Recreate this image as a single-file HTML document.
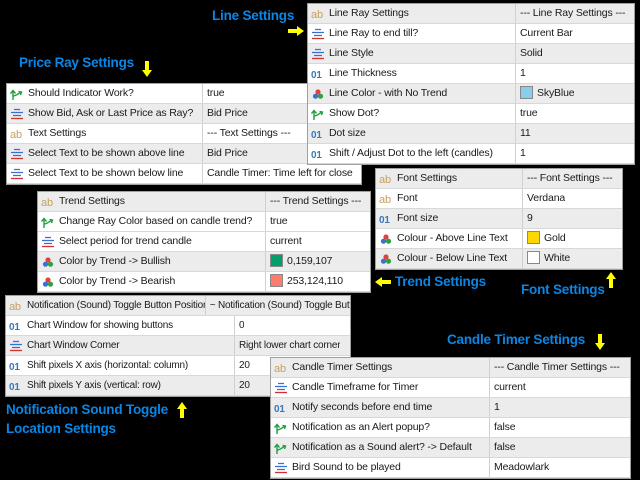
<!DOCTYPE html>
<html><head><meta charset="utf-8">
<style>
*{margin:0;padding:0;box-sizing:border-box}
body{width:640px;height:480px;background:#000;position:relative;overflow:hidden;font-family:"Liberation Sans",sans-serif;font-size:10.5px;letter-spacing:-0.15px;color:#1a1a1a}
.p{position:absolute;background:#fff;border:1px solid #a0a0a0}
.r{height:20px;display:flex;border-bottom:1px solid #d8d8d8}
.r.g{background:#ececec}
.r>div{height:19px;line-height:19px;white-space:nowrap;overflow:hidden}
.c1{display:flex;align-items:center;border-right:1px solid #d0d0d0;padding-left:3px}
.c2{padding-left:4px}
.c1 svg{width:14px;height:12px;margin-right:4px;flex:none}
.lbl{position:absolute;color:#0a86e6;font-weight:bold;font-size:13.5px;font-family:"Liberation Sans",sans-serif;letter-spacing:-0.2px}
.sw{display:inline-block;width:13px;height:13px;border:1px solid #888;vertical-align:-3px;margin-right:4px}
.ar{position:absolute}
</style></head><body>
<svg width="0" height="0" style="position:absolute">
<defs>
<symbol id="ab" viewBox="0 0 14 12"><text x="0" y="10" font-size="11" fill="#c8a060" font-family="Liberation Sans">ab</text></symbol>
<symbol id="n" viewBox="0 0 14 12"><text x="0" y="10" font-size="10" fill="#3a78b8" font-family="Liberation Sans" font-weight="bold">01</text></symbol>
<symbol id="ln" viewBox="0 0 14 12"><path d="M4 1.5h6M1 4.5h12M3 7.5h8" stroke="#3a6fd0" stroke-width="1.3"/><path d="M1 10.5h12" stroke="#d03030" stroke-width="1.3"/></symbol>
<symbol id="co" viewBox="0 0 14 12"><circle cx="7" cy="4" r="2.6" fill="#e04040"/><circle cx="4.5" cy="8.2" r="2.6" fill="#3a70d0"/><circle cx="9.5" cy="8.2" r="2.6" fill="#30a040"/></symbol>
<symbol id="bo" viewBox="0 0 14 12"><path d="M3 12V3M0.5 5.5L3 2.5l2.5 3M3 8c3 0 5-2 8-4M8.5 3.5L11.5 4l-1 3" stroke="#20a040" stroke-width="1.4" fill="none"/></symbol>
</defs></svg>

<div class="lbl" style="left:212px;top:8px">Line Settings</div>
<svg class="ar" style="left:288px;top:26px" width="16" height="10"><path d="M0 3h9V0l7 5-7 5V7H0z" fill="#ffff00"/></svg>
<div class="lbl" style="left:19px;top:55px">Price Ray Settings</div>
<svg class="ar" style="left:142px;top:61px" width="10" height="16"><path d="M3 0h4v9h3l-5 7-5-7h3z" fill="#ffff00"/></svg>

<div class="p" style="left:6px;top:83px;width:356px">
<div class="r"><div class="c1" style="width:196px"><svg><use href="#bo"/></svg>Should Indicator Work?</div><div class="c2">true</div></div>
<div class="r g"><div class="c1" style="width:196px"><svg><use href="#ln"/></svg>Show Bid, Ask or Last Price as Ray?</div><div class="c2">Bid Price</div></div>
<div class="r"><div class="c1" style="width:196px"><svg><use href="#ab"/></svg>Text Settings</div><div class="c2">--- Text Settings ---</div></div>
<div class="r g"><div class="c1" style="width:196px"><svg><use href="#ln"/></svg>Select Text to be shown above line</div><div class="c2">Bid Price</div></div>
<div class="r"><div class="c1" style="width:196px"><svg><use href="#ln"/></svg>Select Text to be shown below line</div><div class="c2">Candle Timer: Time left for close</div></div>
</div>

<div class="p" style="left:307px;top:3px;width:328px">
<div class="r g"><div class="c1" style="width:208px"><svg><use href="#ab"/></svg>Line Ray Settings</div><div class="c2">--- Line Ray Settings ---</div></div>
<div class="r"><div class="c1" style="width:208px"><svg><use href="#ln"/></svg>Line Ray to end till?</div><div class="c2">Current Bar</div></div>
<div class="r g"><div class="c1" style="width:208px"><svg><use href="#ln"/></svg>Line Style</div><div class="c2">Solid</div></div>
<div class="r"><div class="c1" style="width:208px"><svg><use href="#n"/></svg>Line Thickness</div><div class="c2">1</div></div>
<div class="r g"><div class="c1" style="width:208px"><svg><use href="#co"/></svg>Line Color - with No Trend</div><div class="c2"><span class="sw" style="background:#87ceeb"></span>SkyBlue</div></div>
<div class="r"><div class="c1" style="width:208px"><svg><use href="#bo"/></svg>Show Dot?</div><div class="c2">true</div></div>
<div class="r g"><div class="c1" style="width:208px"><svg><use href="#n"/></svg>Dot size</div><div class="c2">11</div></div>
<div class="r"><div class="c1" style="width:208px"><svg><use href="#n"/></svg>Shift / Adjust Dot to the left (candles)</div><div class="c2">1</div></div>
</div>

<div class="p" style="left:37px;top:191px;width:334px">
<div class="r g"><div class="c1" style="width:228px"><svg><use href="#ab"/></svg>Trend Settings</div><div class="c2">--- Trend Settings ---</div></div>
<div class="r"><div class="c1" style="width:228px"><svg><use href="#bo"/></svg>Change Ray Color based on candle trend?</div><div class="c2">true</div></div>
<div class="r"><div class="c1" style="width:228px"><svg><use href="#ln"/></svg>Select period for trend candle</div><div class="c2">current</div></div>
<div class="r g"><div class="c1" style="width:228px"><svg><use href="#co"/></svg>Color by Trend -&gt; Bullish</div><div class="c2"><span class="sw" style="background:#009f6b"></span>0,159,107</div></div>
<div class="r"><div class="c1" style="width:228px"><svg><use href="#co"/></svg>Color by Trend -&gt; Bearish</div><div class="c2"><span class="sw" style="background:#fd7c6e"></span>253,124,110</div></div>
</div>

<div class="p" style="left:375px;top:168px;width:248px">
<div class="r g"><div class="c1" style="width:147px"><svg><use href="#ab"/></svg>Font Settings</div><div class="c2">--- Font Settings ---</div></div>
<div class="r"><div class="c1" style="width:147px"><svg><use href="#ab"/></svg>Font</div><div class="c2">Verdana</div></div>
<div class="r g"><div class="c1" style="width:147px"><svg><use href="#n"/></svg>Font size</div><div class="c2">9</div></div>
<div class="r"><div class="c1" style="width:147px"><svg><use href="#co"/></svg>Colour - Above Line Text</div><div class="c2"><span class="sw" style="background:#ffd700"></span>Gold</div></div>
<div class="r g"><div class="c1" style="width:147px"><svg><use href="#co"/></svg>Colour - Below Line Text</div><div class="c2"><span class="sw" style="background:#fff"></span>White</div></div>
</div>

<svg class="ar" style="left:375px;top:277px" width="16" height="10"><path d="M16 3H7V0L0 5l7 5V7h9z" fill="#ffff00"/></svg>
<div class="lbl" style="left:395px;top:274px">Trend Settings</div>
<div class="lbl" style="left:521px;top:282px">Font Settings</div>
<svg class="ar" style="left:606px;top:272px" width="10" height="16"><path d="M3 16h4V7h3L5 0 0 7h3z" fill="#ffff00"/></svg>

<div class="p" style="left:5px;top:295px;width:346px;font-size:10px;letter-spacing:-0.2px">
<div class="r g"><div class="c1" style="width:229px"><svg><use href="#ab"/></svg>Notification (Sound) Toggle Button Position</div><div class="c2">~ Notification (Sound) Toggle Button ~</div></div>
<div class="r"><div class="c1" style="width:229px"><svg><use href="#n"/></svg>Chart Window for showing buttons</div><div class="c2">0</div></div>
<div class="r g"><div class="c1" style="width:229px"><svg><use href="#ln"/></svg>Chart Window Corner</div><div class="c2">Right lower chart corner</div></div>
<div class="r"><div class="c1" style="width:229px"><svg><use href="#n"/></svg>Shift pixels X axis (horizontal: column)</div><div class="c2">20</div></div>
<div class="r g"><div class="c1" style="width:229px"><svg><use href="#n"/></svg>Shift pixels Y axis (vertical: row)</div><div class="c2">20</div></div>
</div>

<div class="lbl" style="left:447px;top:332px">Candle Timer Settings</div>
<svg class="ar" style="left:595px;top:334px" width="10" height="16"><path d="M3 0h4v9h3l-5 7-5-7h3z" fill="#ffff00"/></svg>

<div class="p" style="left:270px;top:357px;width:361px">
<div class="r g"><div class="c1" style="width:219px"><svg><use href="#ab"/></svg>Candle Timer Settings</div><div class="c2">--- Candle Timer Settings ---</div></div>
<div class="r"><div class="c1" style="width:219px"><svg><use href="#ln"/></svg>Candle Timeframe for Timer</div><div class="c2">current</div></div>
<div class="r g"><div class="c1" style="width:219px"><svg><use href="#n"/></svg>Notify seconds before end time</div><div class="c2">1</div></div>
<div class="r"><div class="c1" style="width:219px"><svg><use href="#bo"/></svg>Notification as an Alert popup?</div><div class="c2">false</div></div>
<div class="r g"><div class="c1" style="width:219px"><svg><use href="#bo"/></svg>Notification as a Sound alert? -&gt; Default</div><div class="c2">false</div></div>
<div class="r"><div class="c1" style="width:219px"><svg><use href="#ln"/></svg>Bird Sound to be played</div><div class="c2">Meadowlark</div></div>
</div>

<div class="lbl" style="left:6px;top:402px">Notification Sound Toggle</div>
<svg class="ar" style="left:177px;top:402px" width="10" height="16"><path d="M3 16h4V7h3L5 0 0 7h3z" fill="#ffff00"/></svg>
<div class="lbl" style="left:6px;top:421px">Location Settings</div>
</body></html>
